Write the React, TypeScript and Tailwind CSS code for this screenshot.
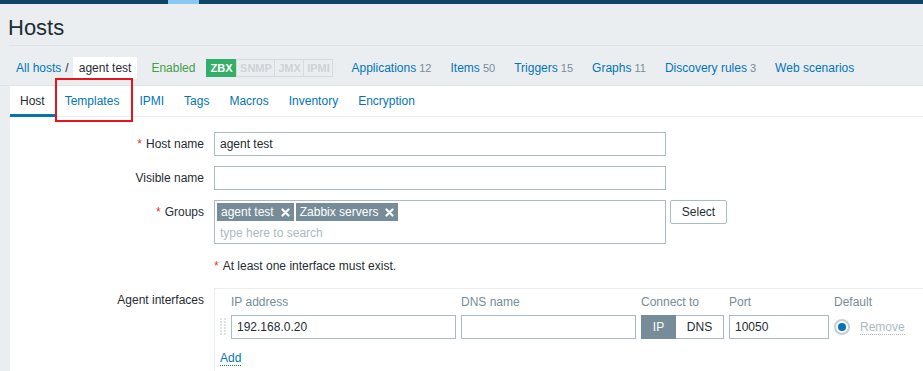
import type { ReactNode } from 'react'

const NAV_LINKS = [
  { label: 'Applications', count: '12' },
  { label: 'Items', count: '50' },
  { label: 'Triggers', count: '15' },
  { label: 'Graphs', count: '11' },
  { label: 'Discovery rules', count: '3' },
  { label: 'Web scenarios', count: '' },
]

const TABS = ['Host', 'Templates', 'IPMI', 'Tags', 'Macros', 'Inventory', 'Encryption']

function Cross() {
  return (
    <svg width="9" height="9" viewBox="0 0 9 9" className="ml-[7px]">
      <path d="M1.5 1.5 L7.5 7.5 M7.5 1.5 L1.5 7.5" stroke="#fff" strokeWidth="2.2" strokeLinecap="round" />
    </svg>
  )
}

function DragHandle() {
  const dots = []
  for (let r = 0; r < 6; r++) {
    dots.push(<rect key={'a' + r} x="0" y={r * 3} width="2" height="2" fill="#dfe4e7" />)
    dots.push(<rect key={'b' + r} x="4" y={r * 3} width="2" height="2" fill="#dfe4e7" />)
  }
  return (
    <svg width="6" height="18" viewBox="0 0 6 18">
      {dots}
    </svg>
  )
}

function Row({ label, required, children }: { label: string; required?: boolean; children: ReactNode }) {
  return (
    <div className="grid grid-cols-[194px_1fr] gap-x-[10px]">
      <div className="text-right h-[24px] leading-[24px]">
        {required && <span className="text-[#e33734] mr-[4px]">*</span>}
        {label}
      </div>
      <div>{children}</div>
    </div>
  )
}

export default function App() {
  return (
    <div className="w-[923px] h-[371px] overflow-hidden bg-[#ebeef0] font-['Liberation_Sans',Arial,sans-serif] text-[12px] text-[#1f2c33]">
      {/* top bar */}
      <div className="h-[4px] bg-[#0e4566] flex">
        <div className="ml-[168px] w-[31px] bg-[#8ac8f2]" />
      </div>

      <div className="pl-[9px]">
        <div className="h-[42px] pt-[13px] border-b border-[#dde3e6]">
          <h1 className="text-[22px] leading-[22px] -ml-[1px]">Hosts</h1>
        </div>
      </div>

      {/* breadcrumbs */}
      <div className="pl-[16px] pt-[11px] pb-[6px] flex items-center h-[40px] border-b border-[#dde3e6]">
        <span className="text-[#0275b8]">All hosts</span>
        <span className="mx-[4px]">/</span>
        <span className="bg-white h-[22px] leading-[22px] px-[6px]">agent test</span>
        <span className="ml-[14px] text-[#429e47]">Enabled</span>
        <div className="ml-[11px] flex h-[18px] leading-[16px] text-[11px] font-bold">
          <span className="shrink-0 w-[30px] text-center bg-[#34af67] text-white border border-[#34af67]">ZBX</span>
          <span className="shrink-0 w-[39px] text-center text-[#cdd3d6] border border-[#d5dadd]">SNMP</span>
          <span className="shrink-0 w-[29px] text-center text-[#cdd3d6] border border-l-0 border-[#d5dadd]">JMX</span>
          <span className="shrink-0 w-[29px] text-center text-[#cdd3d6] border border-l-0 border-[#d5dadd]">IPMI</span>
        </div>
        <div className="ml-[18px] flex gap-[19px]">
          {NAV_LINKS.map(n => (
            <span key={n.label} className="text-[#0275b8]">
              {n.label}
              {n.count && <span className="text-[#768d99] text-[11px]"> {n.count}</span>}
            </span>
          ))}
        </div>
      </div>

      {/* content */}
      <div className="ml-[10px] bg-white h-[300px]">
        <div className="flex border-b border-[#ebeef0] h-[31px]">
          {TABS.map((t, i) => (
            <div key={t} className={`relative h-[30px] flex items-center px-[10px] ${i === 0 ? 'text-[#1f2c33]' : 'text-[#0275b8]'}`}>
              {t}
              {i === 0 && <span className="absolute left-0 right-0 bottom-[-1px] h-[3px] bg-[#0275b8]" />}
              {i === 1 && <span className="absolute left-0 top-[-8px] w-[78px] h-[44px] border-2 border-[#e8141c]" />}
            </div>
          ))}
        </div>

        <div className="pt-[15px] flex flex-col gap-[10px]">
          <Row label="Host name" required>
            <div className="w-[452px] h-[24px] border border-[#acbbc2] px-[5px] leading-[22px]">agent test</div>
          </Row>
          <Row label="Visible name">
            <div className="w-[452px] h-[24px] border border-[#acbbc2]" />
          </Row>
          <Row label="Groups" required>
            <div className="flex items-start gap-[4px]">
              <div className="w-[452px] h-[44px] border border-[#acbbc2] pl-[2px] pt-[2px]">
                <div className="flex gap-[2px]">
                  <span className="flex items-center h-[18px] bg-[#768d99] text-white px-[4px]">agent test<Cross /></span>
                  <span className="flex items-center h-[18px] bg-[#768d99] text-white px-[4px]">Zabbix servers<Cross /></span>
                </div>
                <div className="pl-[3px] h-[21px] leading-[24px] text-[#acbbc2]">type here to search</div>
              </div>
              <button className="h-[24px] w-[57px] border border-[#acbbc2] rounded-[2px] bg-white text-[#1f2c33]">Select</button>
            </div>
          </Row>
          <Row label="">
            <div className="h-[24px] leading-[24px]">
              <span className="text-[#e33734] mr-[4px]">*</span>At least one interface must exist.
            </div>
          </Row>
          <div className="grid grid-cols-[194px_1fr] gap-x-[10px]">
            <div className="text-right h-[24px] leading-[24px]">Agent interfaces</div>
            <div className="border-t border-l border-[#ebeef0] pl-[5px] h-[100px]">
              <div className="grid grid-cols-[6px_225px_175px_83px_100px_auto] gap-x-[5px] items-center">
                <span />
                <span className="h-[26px] leading-[26px] text-[#768d99]">IP address</span>
                <span className="h-[26px] leading-[26px] text-[#768d99]">DNS name</span>
                <span className="h-[26px] leading-[26px] text-[#768d99]">Connect to</span>
                <span className="h-[26px] leading-[26px] text-[#768d99]">Port</span>
                <span className="h-[26px] leading-[26px] text-[#768d99]">Default</span>

                <DragHandle />
                <div className="h-[24px] border border-[#acbbc2] px-[5px] leading-[22px]">192.168.0.20</div>
                <div className="h-[24px] border border-[#acbbc2]" />
                <div className="h-[24px] flex">
                  <span className="w-[35px] bg-[#768d99] text-white flex items-center justify-center">IP</span>
                  <span className="flex-1 border border-l-0 border-[#acbbc2] flex items-center justify-center">DNS</span>
                </div>
                <div className="h-[24px] border border-[#acbbc2] px-[5px] leading-[22px]">10050</div>
                <div className="flex items-center h-[24px]">
                  <span className="w-[16px] h-[16px] rounded-full border-2 border-[#c5d0d6] flex items-center justify-center">
                    <span className="w-[8px] h-[8px] rounded-full bg-[#0275b8]" />
                  </span>
                  <span className="ml-[10px] text-[#acbbc2] border-b border-dotted border-[#acbbc2] leading-[14px]">Remove</span>
                </div>
              </div>
              <div className="mt-[10px]">
                <span className="text-[#0275b8] border-b border-dotted border-[#0275b8] leading-[14px] inline-block">Add</span>
              </div>
            </div>
          </div>
        </div>
      </div>
    </div>
  )
}
